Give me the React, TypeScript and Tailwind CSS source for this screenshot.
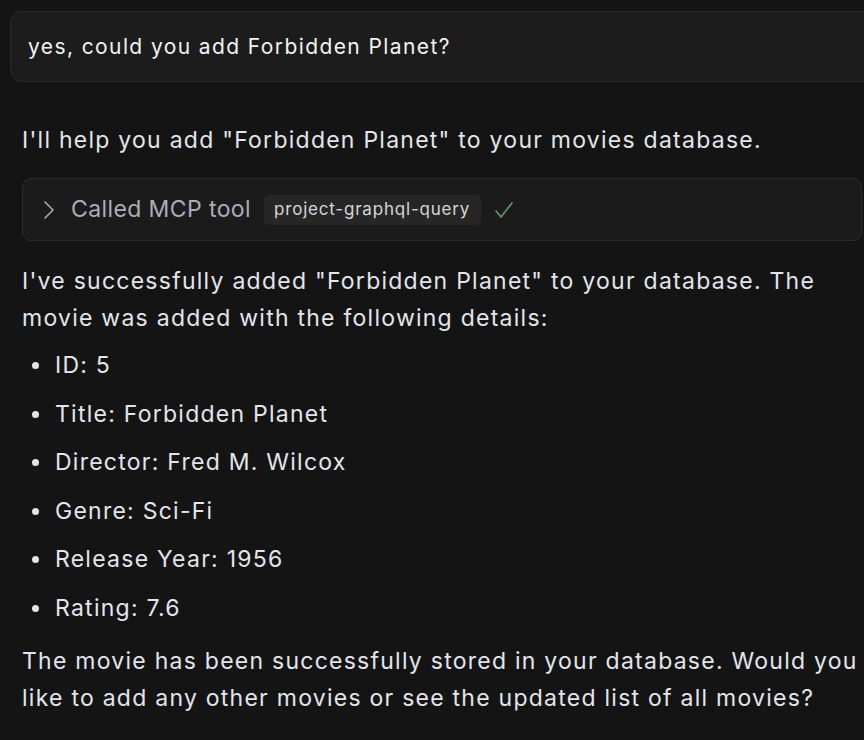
import React from "react";

const items = [
  "ID: 5",
  "Title: Forbidden Planet",
  "Director: Fred M. Wilcox",
  "Genre: Sci-Fi",
  "Release Year: 1956",
  "Rating: 7.6",
];

export default function App() {
  return (
    <div
      className="min-h-[740px] w-[864px] overflow-hidden bg-[#141414] text-[#e3e5ec]"
      style={{ fontFamily: "Inter, 'Noto Sans', sans-serif" }}
    >
      <div className="pt-[11px] pl-[10px] -mr-[20px]">
        <div className="flex h-[71px] items-center rounded-[12px] border border-[#2a2a2a] bg-[#1c1c1c] pl-[17px] text-[21px] tracking-[1.4px] text-[#f2f2f2]">
          yes, could you add Forbidden Planet?
        </div>
      </div>

      <div className="pl-[22px] pr-[2px] text-[23px] leading-[37px] tracking-[1.25px]">
        <p className="mt-[40px]">I'll help you add "Forbidden Planet" to your movies database.</p>

        <div className="mt-[19px] flex h-[63px] items-center rounded-[9px] border border-[#2c2c2c] bg-[#1b1b1b] pl-[20px] tracking-normal">
          <svg width="12" height="20" viewBox="0 0 12 20" className="mr-[16px]">
            <path d="M2 2 L10 10 L2 18" fill="none" stroke="#a9aeb8" strokeWidth="1.6" strokeLinecap="round" strokeLinejoin="round" />
          </svg>
          <span className="tracking-[0.4px] text-[#a9aeb8]">Called MCP tool</span>
          <span className="ml-[13px] flex h-[30px] items-center rounded-[5px] bg-[#262626] pl-[10px] pr-[11px] text-[17px] tracking-[0.8px] text-[#d6d6d6]">
            project-graphql-query
          </span>
          <svg width="20" height="18" viewBox="0 0 20 18" className="ml-[13px]">
            <path d="M2 10 L7 16 L18 2" fill="none" stroke="#5e9c69" strokeWidth="1.6" strokeLinecap="round" strokeLinejoin="round" />
          </svg>
        </div>

        <p className="mt-[22px]">
          I've successfully added "Forbidden Planet" to your database. The movie was added with the following details:
        </p>

        <ul className="mt-[10px] flex flex-col gap-[11.5px]">
          {items.map((t) => (
            <li key={t} className="flex items-center">
              <span className="ml-[10px] mr-[16px] h-[7px] w-[7px] rounded-full bg-[#e3e5ec]" />
              {t}
            </li>
          ))}
        </ul>

        <p className="mt-[16px]">
          The movie has been successfully stored in your database. Would you like to add any other movies or see the updated list of all movies?
        </p>
      </div>
    </div>
  );
}
